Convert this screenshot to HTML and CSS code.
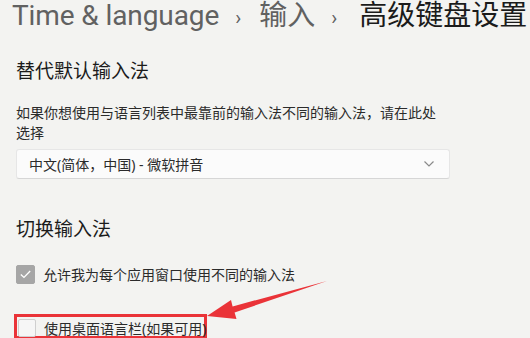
FILE: index.html
```html
<!DOCTYPE html>
<html lang="zh-CN">
<head>
    <meta charset="UTF-8">
    <title>高级键盘设置</title>
    <link rel="stylesheet" href="styles.css">
</head>
<body>

<div class="page">
    <div class="crumbs">
        <span class="crumb first">Time &amp; language</span>
        <span class="sep">›</span>
        <span class="crumb">输入</span>
        <span class="sep second">›</span>
        <span class="crumb current">高级键盘设置</span>
    </div>

    <div class="section">
        <h2>替代默认输入法</h2>
        <p class="desc">如果你想使用与语言列表中最靠前的输入法不同的输入法，请在此处选择</p>
        <div class="select">
            <span>中文(简体，中国) - 微软拼音</span>
            <svg class="chevron" width="12" height="8" viewBox="0 0 12 8"><path d="M1.5 1.5 L6 6 L10.5 1.5" fill="none" stroke="#8a8a8a" stroke-width="1.2"/></svg>
        </div>
    </div>

    <div class="section switch">
        <h2>切换输入法</h2>
        <div class="check-row">
            <span class="box checked">
                <svg width="20" height="20" viewBox="0 0 20 20"><path d="M4.5 10.5 L8.2 14 L15.5 6.5" fill="none" stroke="#fff" stroke-width="1.6"/></svg>
            </span>
            <span>允许我为每个应用窗口使用不同的输入法</span>
        </div>
        <div class="mark">
            <span class="box"></span>
            <span>使用桌面语言栏(如果可用)</span>
        </div>
    </div>

    <!-- red annotation arrow -->
    <svg class="arrow" width="125" height="50" viewBox="0 0 125 50">
        <path d="M2 38 L26 22 L27.6 28.4 L122 3 L29.6 34.4 L31.5 41 Z" fill="#ea3338"/>
    </svg>
</div>

</body>
</html>
```

FILE: styles.css
```css
body {
    margin: 0;
    background-color: #f3f3f1;
    font-family: "Noto Sans", "Noto Sans CJK SC", sans-serif;
    color: #1b1b1b;
}
.page {
    position: relative;
    height: 338px;
    overflow: hidden;
}
.crumbs {
    display: flex;
    align-items: baseline;
    height: 32px;
    padding: 1px 0 0 12px;
    font-family: Roboto, "Noto Sans CJK SC", sans-serif;
    font-size: 28px;
    line-height: 30px;
    color: #616161;
    white-space: nowrap;
    box-sizing: border-box;
}
.crumb {
    flex-shrink: 0;
}
.crumb.first {
    letter-spacing: -0.1px;
}
.crumb.current {
    color: #1b1b1b;
}
.sep {
    flex-shrink: 0;
    font-size: 20px;
    margin: 0 18px 0 16px;
}
.sep.second {
    margin-right: 22px;
}
.section {
    padding-left: 16px;
}
h2 {
    font-size: 19px;
    font-weight: normal;
    margin: 27px 0 0;
    line-height: 24px;
}
.desc {
    font-size: 14px;
    line-height: 20px;
    width: 425px;
    margin: 20px 0 0;
    color: #2b2b2b;
}
.select {
    display: flex;
    align-items: center;
    justify-content: space-between;
    width: 408px;
    height: 28px;
    margin-top: 6px;
    padding: 0 12px;
    background-color: #fbfbfb;
    border: 1px solid #e6e6e6;
    border-bottom-color: #d6d6d6;
    border-radius: 3px;
    font-size: 14px;
    color: #2b2b2b;
}
.chevron {
    margin-right: 2px;
}
.switch h2 {
    margin-top: 38px;
}
.check-row {
    display: flex;
    align-items: center;
    gap: 8px;
    height: 20px;
    margin-top: 23px;
    font-size: 14px;
    color: #2b2b2b;
}
.box {
    flex-shrink: 0;
    width: 19px;
    height: 19px;
    border: 1px solid #cfcfcf;
    border-radius: 2px;
    background-color: #f6f6f6;
    box-sizing: border-box;
}
.box.checked {
    display: flex;
    align-items: center;
    justify-content: center;
    background-color: #a6a6a6;
    border-color: #a6a6a6;
}
/* red highlight round the last option */
.mark {
    display: flex;
    align-items: center;
    gap: 8px;
    width: 193px;
    height: 25px;
    margin: 30px 0 0 -2px;
    padding: 2px 0 0 1px;
    border: 3px solid #ea3338;
    box-sizing: border-box;
    font-size: 14px;
    color: #2b2b2b;
    white-space: nowrap;
}
.mark .box {
    width: 18px;
    height: 18px;
}
.arrow {
    position: absolute;
    left: 205px;
    top: 278px;
}
```
